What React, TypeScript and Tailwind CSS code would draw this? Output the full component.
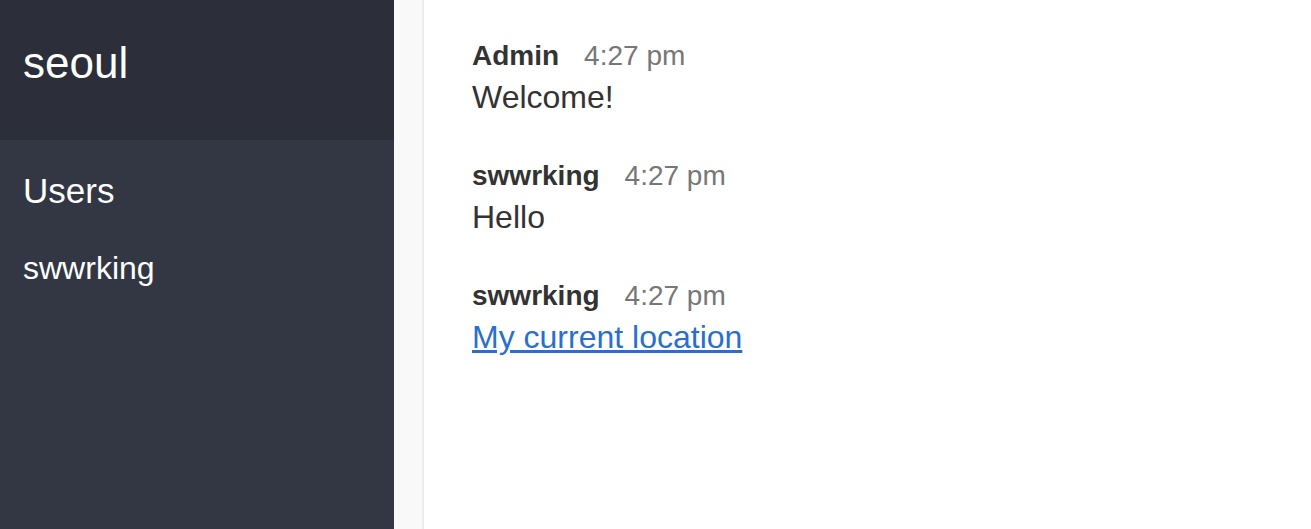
const messages = [
  { name: "Admin", time: "4:27 pm", text: "Welcome!" },
  { name: "swwrking", time: "4:27 pm", text: "Hello" },
  { name: "swwrking", time: "4:27 pm", text: "My current location", link: true },
];

export default function App() {
  return (
    <div className="flex h-[529px] w-full overflow-hidden bg-white font-['Liberation_Sans',Arial,sans-serif]">
      {/* sidebar */}
      <div className="flex w-[394px] shrink-0 flex-col bg-[#333744] text-white">
        <div className="h-[140px] bg-[#2c2f3a] px-[23px] pt-[41px]">
          <h2 className="text-[44px] leading-none font-normal">seoul</h2>
        </div>
        <h3 className="mt-[33px] px-[23px] text-[35px] leading-none font-medium">Users</h3>
        <ul className="mt-[44px] px-[23px]">
          <li className="text-[32px] leading-none font-light">swwrking</li>
        </ul>
      </div>

      {/* scrollbar track */}
      <div className="w-[30px] shrink-0 border-r-2 border-[#ececec] bg-[#f9f9f9]" />

      {/* messages */}
      <div className="flex-1 px-[48px] pt-[42px]">
        {messages.map((m, i) => (
          <div key={i} className={i > 0 ? "mt-[49px]" : ""}>
            <p className="text-[28px] leading-none">
              <span className="mr-[25px] font-bold text-[#333]">{m.name}</span>
              <span className="text-[#777]">{m.time}</span>
            </p>
            <p className="mt-[11px] text-[32px] leading-none text-[#333]">
              {m.link ? (
                <a href="#" className="text-[#2a6fce] underline">
                  {m.text}
                </a>
              ) : (
                m.text
              )}
            </p>
          </div>
        ))}
      </div>
    </div>
  );
}
